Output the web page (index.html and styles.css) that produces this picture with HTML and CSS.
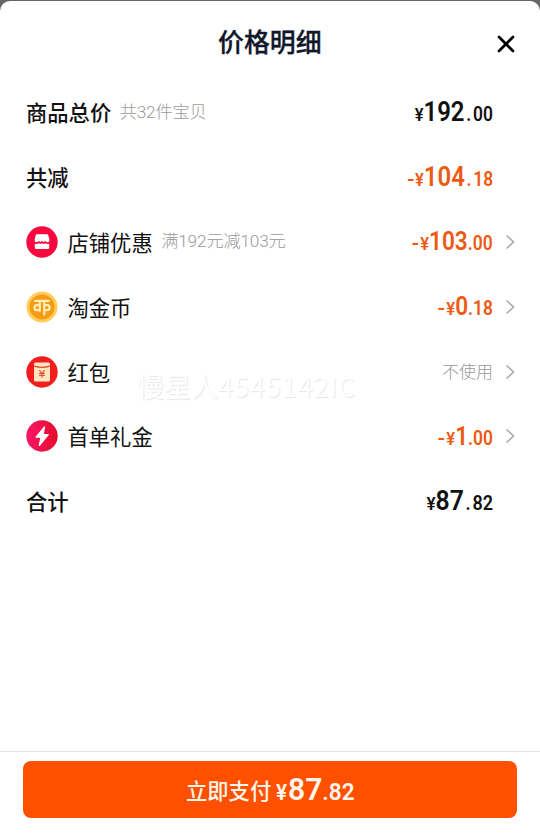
FILE: index.html
```html
<!DOCTYPE html>
<html lang="zh-CN">
<head>
<meta charset="utf-8">
<title>价格明细</title>
<link rel="stylesheet" href="styles.css">
</head>
<body>
<main class="sheet">
  <header class="header">
    <h1 class="title">价格明细</h1>
    <svg class="close" viewBox="0 0 20 20"><path d="M3 3L17 17M17 3L3 17"/></svg>
  </header>
  <section class="rows">
    <div class="row"><span class="label medium">商品总价</span><span class="note">共32件宝贝</span><span class="price"><span class="yen">¥</span><b>192</b><span class="dot wide">.</span>00</span></div>
    <div class="row"><span class="label medium">共减</span><span class="price orange"><span class="minus">-</span><span class="yen">¥</span><b>104</b><span class="dot wide">.</span>18</span></div>
    <div class="row">
      <svg class="icon" viewBox="0 0 32 32"><circle cx="16" cy="16" r="15.7" fill="#f8083e"/><path d="M11 8.2h10q1 0 1.3 1l1.1 4.6q.3 2.4-1.6 2.5-1.5 0-2.6-1.2-1.6 1.6-3.2 0-1.6 1.6-3.2 0-1.1 1.2-2.6 1.2-1.9-.1-1.6-2.5L9.7 9.2q.3-1 1.3-1z" fill="#fff"/><path d="M8.8 17.7q2.2.7 4-.5 1.6 1.2 3.2 0 1.6 1.2 3.2 0 1.8 1.2 4 .5v4.1q0 1.3-1.3 1.3H10.1q-1.3 0-1.3-1.3z" fill="#fff"/></svg>
      <span class="label">店铺优惠</span><span class="note">满192元减103元</span><span class="price orange small"><span class="minus">-</span><span class="yen">¥</span><b>103</b><span class="dot">.</span>00</span><svg class="chevron" viewBox="0 0 10 16"><path d="M1.5 1.5L8.5 8L1.5 14.5"/></svg>
    </div>
    <div class="row">
      <svg class="icon" viewBox="0 0 32 32"><circle cx="16" cy="16" r="15.5" fill="#ffce58"/><circle cx="16" cy="16" r="12.5" fill="#f79a16"/><path d="M9 9.800H23M13.200 14.200h-2.400q-2.300 0-2.300 2.500t2.300 2.500h2.400M18.800 14.200h2.400q2.300 0 2.300 2.500t-2.300 2.500h-2.400M13.800 10v10M18.200 10v13.500" fill="none" stroke="#ffedb4" stroke-width="2.200" stroke-linecap="round"/></svg>
      <span class="label">淘金币</span><span class="price orange small"><span class="minus">-</span><span class="yen">¥</span><b>0</b><span class="dot">.</span>18</span><svg class="chevron" viewBox="0 0 10 16"><path d="M1.5 1.5L8.5 8L1.5 14.5"/></svg>
    </div>
    <div class="row">
      <svg class="icon" viewBox="0 0 32 32"><circle cx="16" cy="16" r="15.7" fill="#f51c1d"/><rect x="8" y="6.5" width="16" height="19" rx="1.5" fill="#ffe7c2"/><path d="M8 10.2q8 2.3 16 0" fill="none" stroke="#e94a35" stroke-width="1.2"/><path d="M13.3 14l2.700 3.400 2.700-3.400M13.200 17.400h5.600M13.200 19.400h5.600M16 17.400v4.400" fill="none" stroke="#ef4938" stroke-width="1.100"/></svg>
      <span class="label">红包</span><span class="unused">不使用</span><svg class="chevron" viewBox="0 0 10 16"><path d="M1.5 1.5L8.5 8L1.5 14.5"/></svg>
    </div>
    <div class="row">
      <svg class="icon" viewBox="0 0 32 32"><defs><linearGradient id="bolt" x1="0" x2="1"><stop stop-color="#fa1666"/><stop offset="1" stop-color="#e60d2b"/></linearGradient></defs><circle cx="16" cy="16" r="15.7" fill="url(#bolt)"/><path d="M18.5 6.8L10 17.2h5L13.3 25.5 22.3 14.6h-5.1z" fill="#fff" stroke="#fff" stroke-width="1.2" stroke-linejoin="round"/></svg>
      <span class="label">首单礼金</span><span class="price orange small"><span class="minus">-</span><span class="yen">¥</span><b>1</b><span class="dot">.</span>00</span><svg class="chevron" viewBox="0 0 10 16"><path d="M1.5 1.5L8.5 8L1.5 14.5"/></svg>
    </div>
    <div class="row"><span class="label medium">合计</span><span class="price total"><span class="yen">¥</span><b>87</b><span class="dot wide">.</span>82</span></div>
  </section>
  <footer class="footer">
    <button class="pay"><span class="pay-label">立即支付</span><span class="price pay-price"><span class="yen">¥</span><b>87</b><span class="dot">.</span>82</span></button>
  </footer>
  <div class="watermark">慢星人<span class="code">4545142IC</span></div>
</main>
</body>
</html>
```
FILE: styles.css
```css
* { box-sizing: border-box; }
body {
  margin: 0;
  padding-top: 1px;
  height: 839px;
  overflow: hidden;
  background: #666;
  font-family: "Noto Sans CJK SC", sans-serif;
}
.sheet {
  position: relative;
  display: flex;
  flex-direction: column;
  height: 838px;
  border-radius: 10px 10px 0 0;
  background: #fff;
  color: #111;
}
.header {
  display: flex;
  align-items: center;
  height: 79px;
  padding: 4px 24px 0 218px;
}
.title {
  margin: -3px 0 0;
  font-size: 25.9px;
  line-height: 38px;
  font-weight: 500;
  -webkit-text-stroke: .3px #11182b;
  color: #11182b;
}
.close { width: 20px; height: 20px; margin: 3px 0 0 auto; }
.close path { fill: none; stroke: #000; stroke-width: 2.7; stroke-linecap: round; }
.rows { flex: 1; }
.row {
  display: flex;
  align-items: center;
  height: 64.8px;
  padding: 0 25px 0 26px;
}
.icon { width: 32px; height: 32px; margin-right: 9.5px; }
.label { font-size: 21.3px; line-height: 32px; }
.medium { font-weight: 500; }
.note {
  margin: -1px 0 0 8.5px;
  font-family: Roboto, "Noto Sans CJK SC", sans-serif;
  font-size: 17.2px;
  letter-spacing: -.15px;
  line-height: 26px;
  color: #999;
  font-weight: 300;
}
.price {
  display: flex;
  align-items: baseline;
  margin: 2px 22px 0 auto;
  font-family: Roboto, sans-serif;
  font-size: 20px;
  line-height: 32px;
  font-weight: 600;
  transform: scaleX(.87);
  transform-origin: right;
}
.price b { font-size: 27.5px; font-weight: 600; }
.yen { font-size: 19px; }
.minus { margin-right: 1px; transform: scaleX(1.2); }
.wide { margin: 0 2px; }
.total { transform: scaleX(.9); }
.small { margin-right: 12px; }
.small b { font-size: 26px; }
.small .minus { margin-right: 2px; }
.orange { color: #ed5a13; }
.unused { margin: -2px 12px 0 auto; font-size: 17px; color: #999; font-weight: 300; }
.chevron { width: 10px; height: 16px; }
.chevron path { fill: none; stroke: #aaa; stroke-width: 1.6; }
.footer {
  height: 88px;
  padding: 9px 23px 0;
  border-top: 1px solid #e4e4e4;
}
.pay {
  display: flex;
  align-items: center;
  width: 494px;
  height: 57px;
  padding: 0 0 0 163px;
  border: 0;
  border-radius: 8px;
  background: #ff5000;
  color: #fff5eb;
  font-family: inherit;
  font-size: 21.3px;
  font-weight: 500;
}
.pay-label { margin-top: -1px; }
.pay-price { margin: 2px 0 0 5px; font-size: 24px; transform: scaleX(.94); transform-origin: left; }
.pay-price b { font-size: 32px; }
.pay-price .yen { font-size: 22px; margin-right: 1px; }
.watermark {
  position: absolute;
  left: 137px;
  top: 365px;
  font-size: 27px;
  line-height: 40px;
  color: #fff;
  text-shadow: 1px 1px 1px #e6e6e6;
}
.code { letter-spacing: .9px; }
```
